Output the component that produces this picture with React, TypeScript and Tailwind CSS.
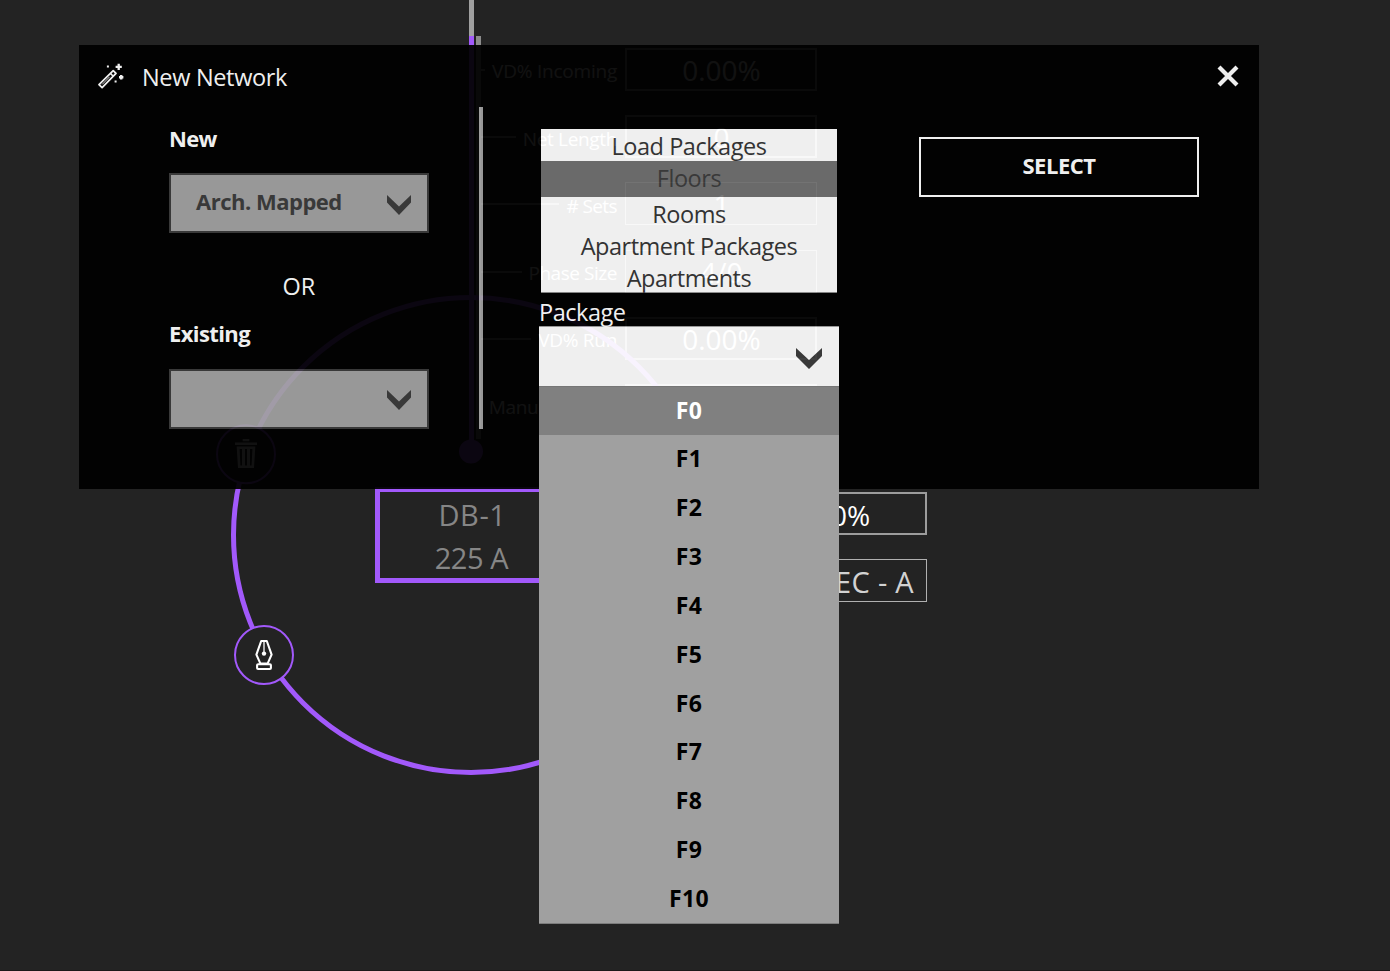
import type { ReactNode } from "react";

const PACKAGE_OPTIONS = ["F0", "F1", "F2", "F3", "F4", "F5", "F6", "F7", "F8", "F9", "F10"];

const LEVELS = [
  { name: "Load Packages", selected: false },
  { name: "Floors", selected: true },
  { name: "Rooms", selected: false },
  { name: "Apartment Packages", selected: false },
  { name: "Apartments", selected: false },
];

type Field = { label: string; value: string; place: string; border: string; tick: string; text: string };

const FIELDS: Field[] = [
  { label: "VD% Incoming", value: "0.00%", place: "top-[48px]", border: "border-2", tick: "w-[4px]", text: "pt-[3px] tracking-[-0.22px]" },
  { label: "Net Length", value: "0", place: "top-[115px]", border: "border-2", tick: "w-[35px]", text: "pt-[5px] tracking-[-0.35px]" },
  { label: "# Sets", value: "1", place: "top-[182px]", border: "border", tick: "w-[78px]", text: "pt-[5px] tracking-[-0.6px]" },
  { label: "Phase Size", value: "4/0", place: "top-[250px]", border: "border", tick: "w-[41px]", text: "pt-[3px] tracking-[-0.45px]" },
  { label: "VD% Run", value: "0.00%", place: "top-[317px]", border: "border-2", tick: "w-[50px]", text: "pt-[3px] tracking-[-0.3px]" },
  { label: "Manual Length", value: "", place: "top-[384px]", border: "border-2", tick: "w-0", text: "pt-[3px] tracking-[-0.3px]" },
];

function Chevron({ className }: { className: string }) {
  return (
    <svg viewBox="0 0 24 20" preserveAspectRatio="none" className={className}>
      <path d="M0 0 L12 11.5 L24 0 V7.5 L12 20 L0 7.5 Z" fill="#3b3b3b" />
    </svg>
  );
}

function WandIcon() {
  return (
    <svg viewBox="0 0 28 28" className="mt-[2px] h-7 w-7" fill="none" stroke="#fff">
      <path d="M16.2 7.6 L19 10.4 L5.1 24.6 L2 21.6 Z" strokeWidth="1.8" strokeLinejoin="round" />
      <path d="M13.4 10.4 L16.3 13.2" strokeWidth="1.5" />
      <path d="M12.6 13.8 L5.2 21.4" strokeWidth="0.9" />
      <path d="M21.7 0.8 V7 M18.6 3.9 H24.8" strokeWidth="2.3" />
      <path d="M24.2 12 V16.4 M22 14.2 H26.4" strokeWidth="2.4" />
      <path d="M9.9 3.5 H11.9 M17.6 18.6 H19.6" strokeWidth="2" />
    </svg>
  );
}

function FieldRow({ field }: { field: Field }) {
  return (
    <div className={`absolute left-[481px] flex h-[43px] w-[336px] items-center ${field.place}`}>
      <span className={`h-[2px] shrink-0 bg-[#8f8f8f] ${field.tick}`} />
      <span className={`ml-auto whitespace-nowrap text-[19px] text-white ${field.text}`}>{field.label}</span>
      <span
        className={`ml-2 flex h-[43px] w-[192px] shrink-0 items-center justify-center border-[#9c9c9c] pl-px pt-px text-[28px] text-white ${field.border}`}
      >
        {field.value}
      </span>
    </div>
  );
}

function Canvas() {
  return (
    <div className="absolute inset-0">
      <div className="absolute left-[469px] top-0 h-[36px] w-[5px] bg-[#a0a0a0]" />
      <div className="absolute left-[476px] top-[36px] h-[403px] w-[5px] bg-[#8c8c8c]" />
      {FIELDS.map((f) => (
        <FieldRow key={f.label} field={f} />
      ))}
      <svg className="absolute left-0 top-0 h-[971px] w-[1390px]" viewBox="0 0 1390 971" fill="none">
        <circle cx="471" cy="535" r="237.5" stroke="#a259fb" strokeWidth="5" />
        <path d="M471.5 36 V451" stroke="#a259fb" strokeWidth="5" />
        <circle cx="471" cy="451.5" r="12" fill="#a259fb" />
        <circle cx="246" cy="454.3" r="29" fill="#232323" stroke="#a259fb" strokeWidth="2" />
        <path d="M235 442.5 H257 V445 H235 Z M242.7 439 H249.3 V441.3 H242.7 Z" fill="#fff" />
        <path
          d="M236.7 446.5 H255.3 L254 468 H238 Z M239.6 449 L240.4 465.5 H242 V449 Z M245 449 V465.5 H247 V449 Z M250 449 V465.5 H251.6 L252.4 449 Z"
          fill="#fff"
          fillRule="evenodd"
        />
        <circle cx="264" cy="655" r="29" fill="#232323" stroke="#a259fb" strokeWidth="2" />
        <g stroke="#fff" strokeWidth="2.1" strokeLinejoin="round">
          <path d="M261.2 641 H266.8 L271.6 654.6 L267.6 663.6 H260.4 L256.4 654.6 Z" />
          <path d="M264 641 V652" strokeWidth="1.3" />
          <rect x="257.1" y="664.2" width="13.8" height="4.8" rx="1" />
        </g>
        <circle cx="264" cy="653.6" r="2.2" fill="#fff" />
      </svg>
      <div className="absolute left-[375px] top-[487px] flex h-[96px] w-[193px] flex-col items-center border-[5px] border-[#a259fb] bg-[#232323] text-[29px] leading-[43px] text-[#868686]">
        <span className="mt-[1px] pl-[2px] tracking-[0.6px]">DB-1</span>
        <span className="tracking-[-0.4px]">225 A</span>
      </div>
      <div className="absolute left-[736px] top-[492px] flex h-[43px] w-[191px] items-center justify-center border-2 border-[#9c9c9c] pt-[3px] text-[28px] text-white">
        <span className="pr-px">0.00%</span>
      </div>
      <div className="absolute left-[736px] top-[559px] flex h-[43px] w-[191px] items-center justify-end border border-[#b0b0b0] pr-[12px] pt-[2px] text-[29px] tracking-[0.3px] text-[#d2d2d2]">
        EC - A
      </div>
    </div>
  );
}

function SelectBox({ children, offset }: { children?: ReactNode; offset: string }) {
  return (
    <div className="flex h-[60px] items-center justify-between border-2 border-[#3b3b3b] bg-[#a1a1a1] pl-[25px] pr-[16px]">
      <span className="pb-[3px] text-[22px] font-bold tracking-[-0.5px] text-[#3b3b3b]">{children}</span>
      <Chevron className={`h-5 w-6 ${offset}`} />
    </div>
  );
}

function Dialog() {
  return (
    <div className="absolute left-[79px] top-[45px] flex h-[444px] w-[1180px] flex-col bg-black text-white opacity-[0.93]">
      <header className="flex h-[62px] items-center pl-[18px] pr-[19px]">
        <WandIcon />
        <h1 className="ml-[17px] pt-[4px] text-[23.5px] tracking-[-0.33px]">New Network</h1>
        <svg viewBox="0 0 24 24" className="ml-auto h-6 w-6" stroke="#fff" strokeWidth="4.2">
          <path d="M3 3 L21 21 M21 3 L3 21" />
        </svg>
      </header>
      <div className="flex pl-[90px]">
        <section className="w-[260px] pt-[16px]">
          <h2 className="mb-[19px] text-[22px] font-bold leading-[31px] tracking-[-0.65px]">New</h2>
          <SelectBox offset="mt-[4px]">Arch. Mapped</SelectBox>
          <p className="mt-[38px] text-center text-[23.5px] leading-[30px]">OR</p>
          <h2 className="mb-[21px] mt-[17px] text-[22px] font-bold leading-[30px] tracking-[-0.6px]">Existing</h2>
          <SelectBox offset="mt-[2px]" />
        </section>
        <div className="ml-[50px] h-[322px] w-[4px] bg-[#a0a0a0]" />
        <section className="ml-[56px] w-[300px] pt-[22px]">
          <ul className="mx-[2px] h-[164px] border-b border-[#8c8c8c] bg-white text-center text-[23.5px] leading-[35px] tracking-[-0.47px] text-[#353535]">
            {LEVELS.map((l) => (
              <li key={l.name} className={l.selected ? "h-[36px] bg-[#707070] text-[#3b3b3b]" : "h-[32px]"}>
                {l.name}
              </li>
            ))}
          </ul>
          <p className="h-[33px] pt-[3px] text-[23.5px] leading-[33px] tracking-[-0.47px]">Package</p>
          <div className="flex h-[60px] justify-end border-t border-[#a0a0a0] bg-white pr-[17px] pt-[21px]">
            <Chevron className="h-[21px] w-[26px]" />
          </div>
        </section>
        <section className="ml-[80px] w-[280px] pt-[30px]">
          <button className="flex h-[60px] w-full items-center justify-center border-2 border-white pb-[3px] text-[22px] font-bold tracking-[-0.45px]">
            SELECT
          </button>
        </section>
      </div>
    </div>
  );
}

function PackageMenu() {
  return (
    <ul className="absolute left-[539px] top-[386px] flex h-[538px] w-[300px] flex-col border-b border-[#7c7c7c] bg-[#a0a0a0] text-[23px] font-bold text-black">
      {PACKAGE_OPTIONS.map((o, i) => (
        <li
          key={o}
          className={`flex flex-1 items-center justify-center pb-px tracking-[0.4px] ${
            i === 0 ? "bg-[#808080] text-white shadow-[inset_0_1px_0_#767676]" : ""
          }`}
        >
          {o}
        </li>
      ))}
    </ul>
  );
}

export default function App() {
  return (
    <div className="relative h-[971px] w-[1390px] overflow-hidden border-b border-[#1b181a] bg-[#232323] font-['Open_Sans','Noto_Sans',sans-serif]">
      <Canvas />
      <Dialog />
      <PackageMenu />
    </div>
  );
}
